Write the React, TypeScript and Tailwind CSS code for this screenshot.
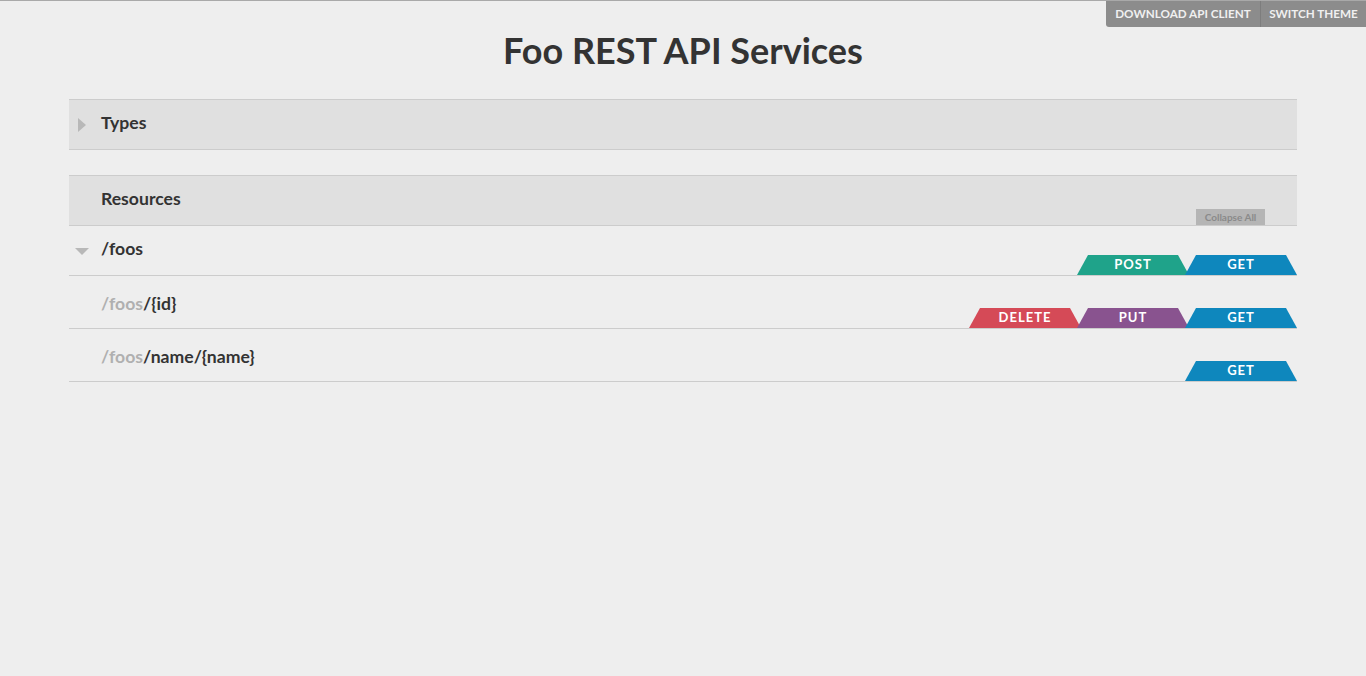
import React from "react";

type Method = { name: string; color: string };

const tabShape =
  "[clip-path:polygon(11px_0,calc(100%-11px)_0,100%_100%,0_100%)]";

function MethodTab({ m }: { m: Method }) {
  return (
    <div
      className={`w-[112px] h-[20px] -ml-[4px] first:ml-0 flex items-center justify-center text-[13px] font-bold tracking-[1px] text-white rounded-t-[3px] ${tabShape} ${m.color}`}
    >
      {m.name}
    </div>
  );
}

const GET = { name: "GET", color: "bg-[#0e87bd]" };
const POST = { name: "POST", color: "bg-[#1fa38a]" };
const PUT = { name: "PUT", color: "bg-[#89538f]" };
const DELETE = { name: "DELETE", color: "bg-[#d54a57]" };

const rows = [
  { parent: "/foos", path: "/{id}", methods: [DELETE, PUT, GET] },
  { parent: "/foos", path: "/name/{name}", methods: [GET] },
];

export default function App() {
  return (
    <div className="min-h-[676px] bg-[#eeeeee] border-t border-[#a9a9a9] font-['Lato','Liberation_Sans',sans-serif] text-[#333]">
      <div className="flex justify-end">
        <div className="flex w-[260px] h-[26px] bg-[#8c8c8c] rounded-bl-[3px] text-[11.7px] font-bold text-[#f0f0f0]">
          <button className="w-[155px] h-full uppercase border-r border-[#7d7d7d]">Download API Client</button>
          <button className="flex-1 h-full uppercase">Switch Theme</button>
        </div>
      </div>

      <h1 className="text-center text-[36px] font-bold leading-none mt-[5px]">Foo REST API Services</h1>

      <div className="mx-[69px] mt-[31px]">
        <div className="h-[51px] bg-[#e0e0e0] border-y border-[#cccccc] flex items-center">
          <svg width="8" height="14" viewBox="0 0 8 14" className="ml-[9px] mr-[15px]">
            <path d="M0 0 L8 7 L0 14 Z" fill="#b8b8b8" />
          </svg>
          <span className="text-[17.6px] font-bold -mt-[2px]">Types</span>
        </div>

        <div className="mt-[25px] h-[51px] bg-[#e0e0e0] border-y border-[#cccccc] relative flex items-center">
          <span className="ml-[32px] text-[17.6px] font-bold -mt-[3px]">Resources</span>
          <button className="absolute right-[32px] bottom-0 w-[69px] h-[16px] bg-[#b5b5b5] text-[10px] font-bold text-[#8a8a8a]">
            Collapse All
          </button>
        </div>

        <div className="h-[50px] border-b border-[#cccccc] flex justify-between">
          <div className="flex items-start pt-[12px]">
            <svg width="14" height="7" viewBox="0 0 14 7" className="ml-[6px] mr-[12px] mt-[10px]">
              <path d="M0 0 L14 0 L7 7 Z" fill="#b8b8b8" />
            </svg>
            <span className="text-[17.6px] font-bold leading-[22px]">/foos</span>
          </div>
          <div className="flex items-end">
            <MethodTab m={POST} />
            <MethodTab m={GET} />
          </div>
        </div>

        {rows.map((r) => (
          <div key={r.path} className="h-[53px] border-b border-[#cccccc] flex justify-between">
            <div className="pl-[32px] pt-[17px] text-[17.6px] font-bold leading-[22px]">
              <span className="text-[#b0b0b0]">{r.parent}</span>
              <span>{r.path}</span>
            </div>
            <div className="flex items-end">
              {r.methods.map((m) => (
                <MethodTab key={m.name} m={m} />
              ))}
            </div>
          </div>
        ))}
      </div>
    </div>
  );
}
